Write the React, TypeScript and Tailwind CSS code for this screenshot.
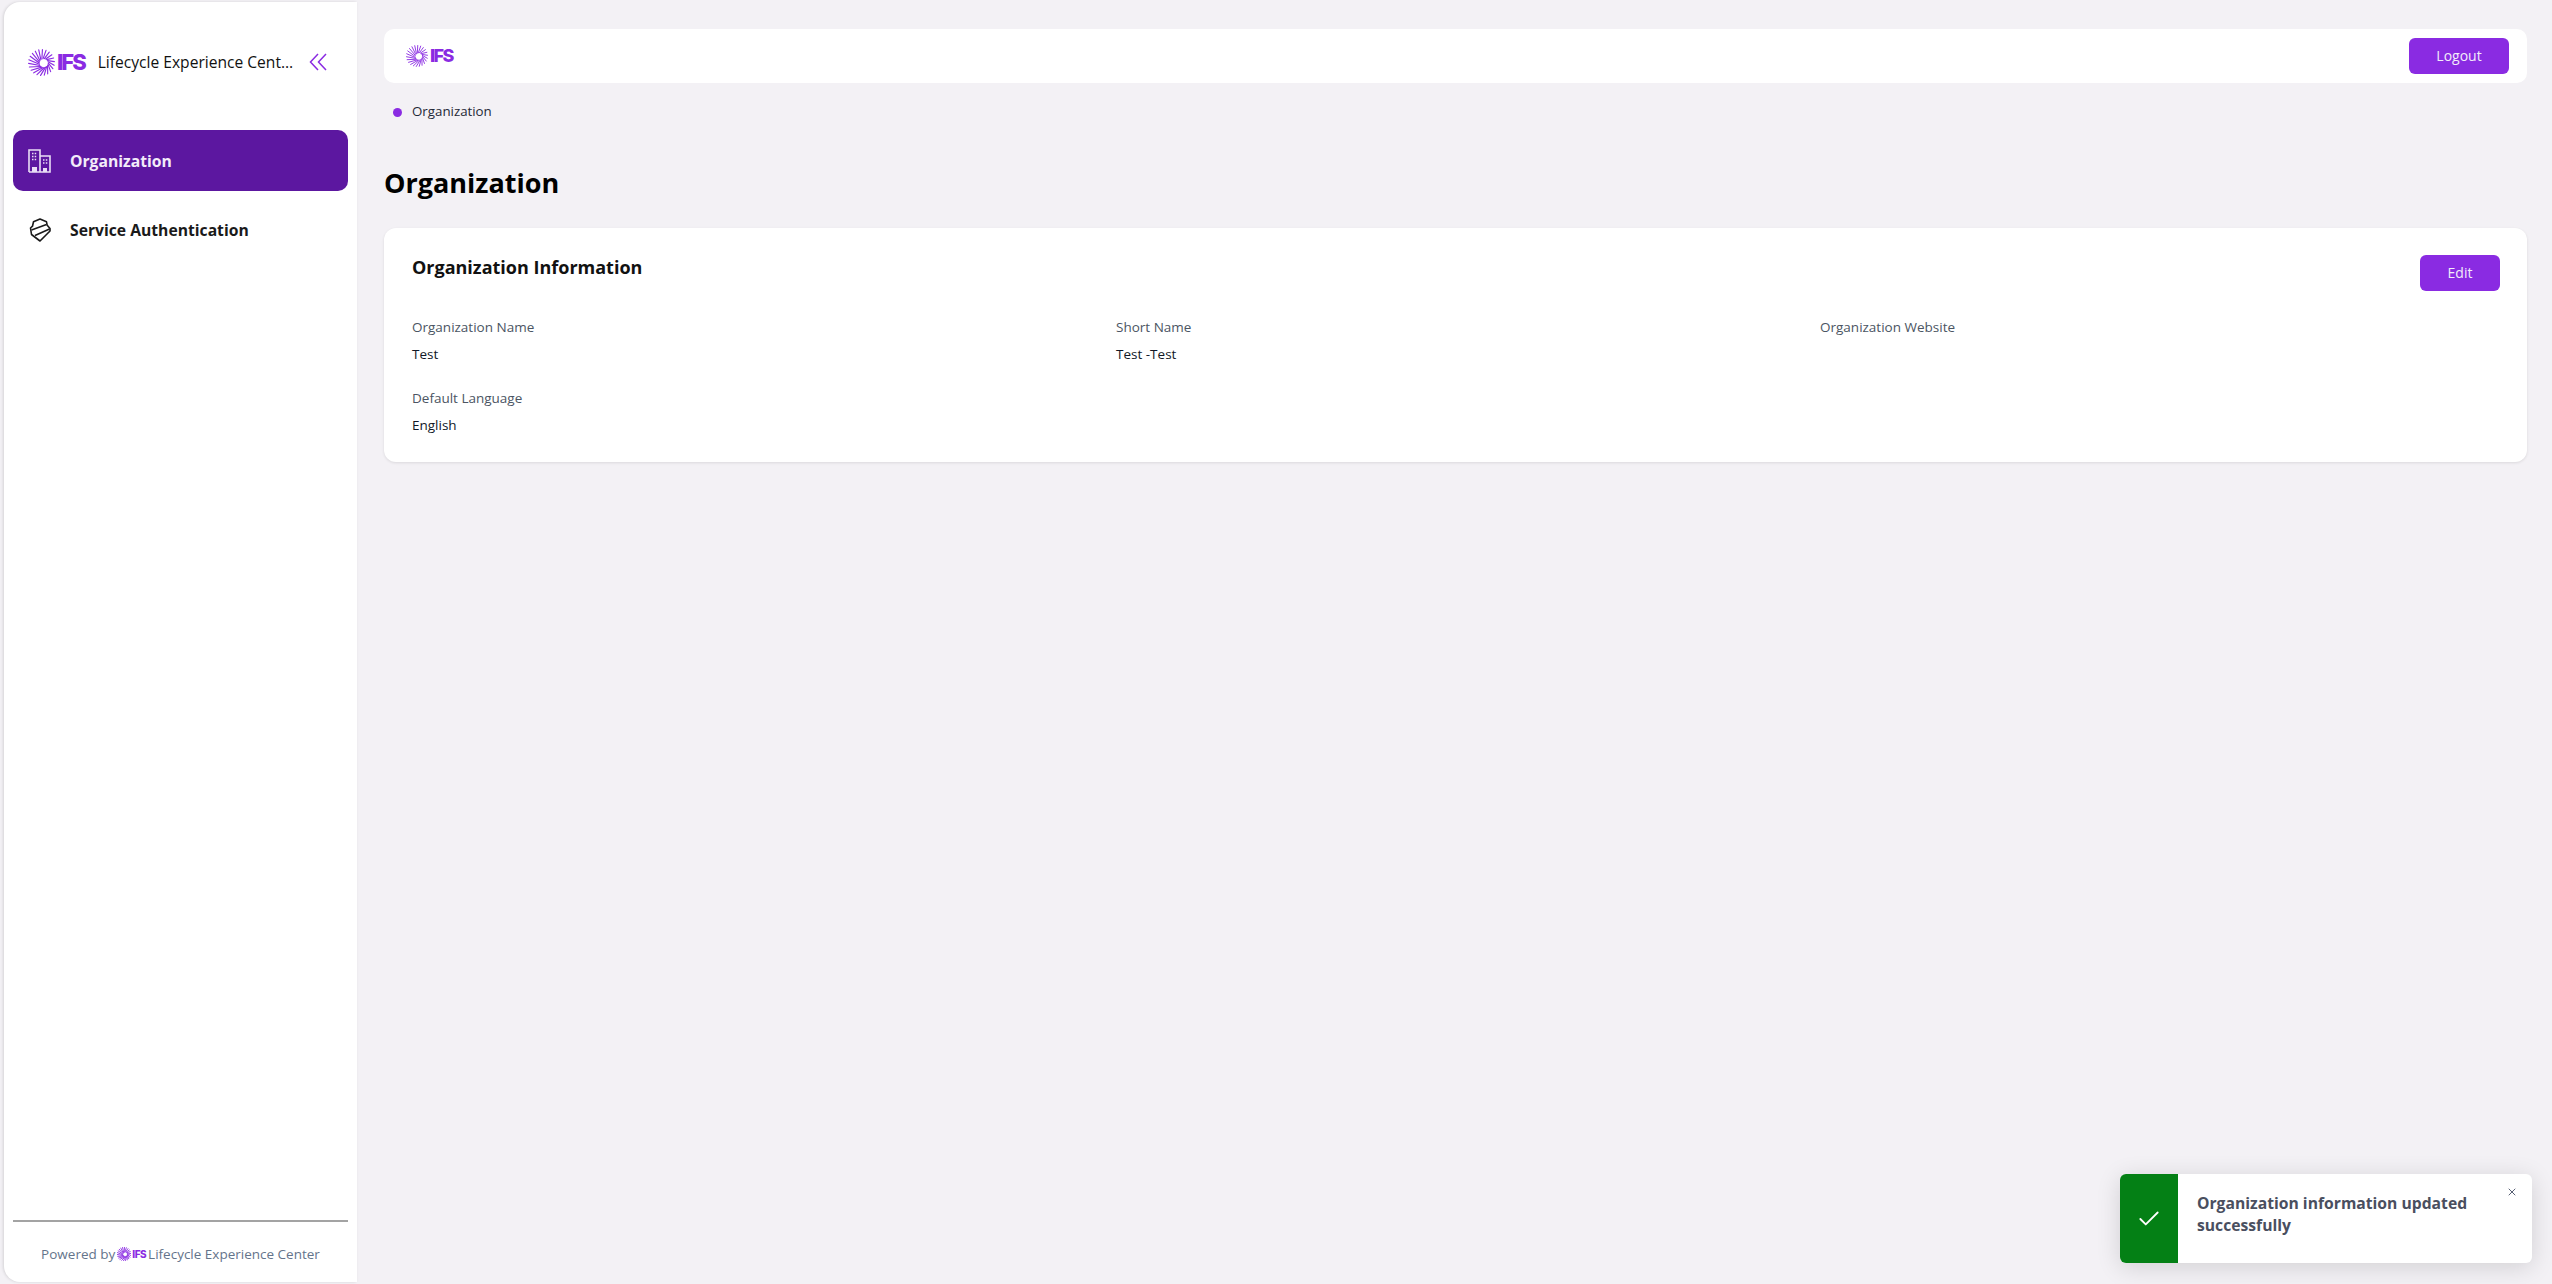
import { Check, X } from "lucide-react";

// sunburst rays: start around an off-centre hole, swing out to the outer ring
const RAYS = Array.from({ length: 22 }, (_, i) => {
  const a = (i * 2 * Math.PI) / 22;
  const b = a + 0.5;
  const x1 = 28 + 8 * Math.cos(a);
  const y1 = 25 + 8 * Math.sin(a);
  const x2 = 24 + 23 * Math.cos(b);
  const y2 = 24 + 23 * Math.sin(b);
  return `M${x1.toFixed(2)} ${y1.toFixed(2)}L${x2.toFixed(2)} ${y2.toFixed(2)}`;
});

function IfsLogo({ sun, text, gap, ray = "2" }: { sun: string; text: string; gap: string; ray?: string }) {
  return (
    <span className={`inline-flex items-center ${gap}`}>
      <svg viewBox="0 0 48 48" className={sun} aria-hidden="true">
        {RAYS.map((d) => (
          <path key={d} d={d} fill="none" stroke="#8a2be2" strokeWidth={ray} strokeLinecap="round" />
        ))}
      </svg>
      <span className={`font-['Inter',sans-serif] font-extrabold text-[#8a2be2] ${text}`}>IFS</span>
    </span>
  );
}

function BuildingIcon() {
  return (
    <svg viewBox="0 0 23 24" className="h-[24px] w-[23px]" fill="none" stroke="#e9def5" strokeWidth="1.600" aria-hidden="true">
      <path d="M1 23V1h11v22" />
      <path d="M12 7h10v16H1" />
      <path d="M4 23v-5h5v5M15 23v-4h4v4" fill="#e9def5" stroke="none" />
      <path d="M4 4.500h1.500M6.700 4.500h1.500M4 7.500h1.500M6.700 7.500h1.500M4 10.500h1.500M6.700 10.500h1.500M15 11h1.500M17.800 11h1.500M15 14h1.500M17.800 14h1.500" />
    </svg>
  );
}

function ShieldIcon() {
  return (
    <svg viewBox="0 0 22 24" className="h-[24px] w-[22px]" fill="none" stroke="#1a1a1a" strokeWidth="1.600" strokeLinejoin="round" aria-hidden="true">
      <path d="M4.500 3.800 11 1l6.500 2.800.7 3.500L21 10.500v2.500L11 23 2.500 16.500 1.500 10l2-1.800z" />
      <path d="M2.500 12 17.500 6.500M6 17.500 20.500 11" />
    </svg>
  );
}

function Field({ label, value }: { label: string; value?: string }) {
  return (
    <div className="h-[50px]">
      <div className="text-[13.500px] leading-[20px] text-[#4b5563]">{label}</div>
      {value && <div className="mt-[7px] text-[13.500px] leading-[20px] text-[#111827]">{value}</div>}
    </div>
  );
}

export default function App() {
  return (
    <div className="flex h-screen overflow-hidden bg-[#f3f1f5] font-['Open_Sans',sans-serif]">
      <aside className="mb-[2px] ml-[4px] mt-[2px] flex w-[353px] shrink-0 flex-col rounded-l-[16px] bg-white px-[9px] shadow-[-1px_0_3px_rgba(0,0,0,0.12)]">
        <div className="mt-[46px] flex h-[28px] items-center pl-[15px]">
          <IfsLogo sun="h-[27px] w-[27px]" text="text-[22px] leading-none tracking-[-2px]" gap="gap-[2px]" />
          <span className="ml-[13px] w-[197px] truncate text-[15.600px] leading-6 text-[#111]">Lifecycle Experience Center</span>
          <svg viewBox="0 0 18 18" className="ml-[14px] h-[18px] w-[18px]" fill="none" stroke="#8a2be2" strokeWidth="1.500" aria-hidden="true">
            <path d="M9 1 1.500 9 9 17M17 1 9.500 9l7.500 8" />
          </svg>
        </div>
        <nav className="mt-[54px] flex flex-col gap-[8px]">
          <a className="flex h-[61px] items-center gap-[19px] rounded-[10px] bg-[#5c17a0] pl-[15px] text-[15.700px] font-bold text-[#f3ecfa]">
            <BuildingIcon />
            <span className="pt-[2px]">Organization</span>
          </a>
          <a className="flex h-[61px] items-center gap-[19px] rounded-[10px] pl-[16px] text-[15.700px] font-bold text-[#1a1a1a]">
            <ShieldIcon />
            <span className="pt-[2px]">Service Authentication</span>
          </a>
        </nav>
        <div className="mt-auto border-t-2 border-[#a3a3a3] pb-[16px] pt-[20px] text-center text-[13.500px] leading-[24px] text-[#64748b]">
          <span className="inline-flex items-center">
            Powered by
            <span className="mx-[2px] inline-flex">
              <IfsLogo sun="h-[14px] w-[14px]" text="text-[10px] leading-none tracking-[-0.500px]" gap="gap-[1px]" ray="3" />
            </span>
            Lifecycle Experience Center
          </span>
        </div>
      </aside>

      <main className="min-w-0 flex-1 pl-[27px] pr-[25px] pt-[29px]">
        <header className="flex h-[54px] items-center justify-between rounded-[10px] bg-white pl-[22px] pr-[18px]">
          <IfsLogo sun="h-[22px] w-[22px]" text="text-[18px] leading-none tracking-[-1.600px]" gap="gap-[2px]" />
          <button className="h-[36px] w-[100px] rounded-[6px] bg-[#8a2be2] pb-[1px] text-sm text-[#f3ecfa]">Logout</button>
        </header>
        <div className="mt-[18px] flex h-[22px] items-center pl-[9px] text-[13.300px] text-[#1f2937]">
          <span className="h-[9px] w-[9px] rounded-full bg-[#8a2be2]" />
          <span className="ml-[10px]">Organization</span>
        </div>
        <h1 className="mt-[41px] text-[27px] font-bold leading-[38px] text-black">Organization</h1>
        <section className="mt-[26px] h-[234px] rounded-[12px] bg-white pl-[28px] pr-[27px] pt-[27px] shadow-[0_1px_3px_rgba(0,0,0,0.1)]">
          <div className="flex items-start justify-between">
            <h2 className="text-lg font-bold leading-[24px] text-[#111]">Organization Information</h2>
            <button className="h-[36px] w-[80px] rounded-[6px] bg-[#8a2be2] pb-[1px] text-sm text-[#f3ecfa]">Edit</button>
          </div>
          <div className="mt-[26px] grid grid-cols-3 gap-x-[24px] gap-y-[21px]">
            <Field label="Organization Name" value="Test" />
            <Field label="Short Name" value="Test -Test" />
            <Field label="Organization Website" />
            <Field label="Default Language" value="English" />
          </div>
        </section>
      </main>

      <div className="absolute bottom-[21px] right-[20px] flex h-[89px] w-[412px] overflow-hidden rounded-[6px] bg-white shadow-[0_4px_24px_rgba(0,0,0,0.14)]">
        <div className="flex w-[58px] shrink-0 items-center justify-center bg-[#048015]">
          <Check className="h-[26px] w-[26px] text-white" strokeWidth={1.700} />
        </div>
        <p className="ml-[19px] w-[290px] pt-[18px] text-[15.700px] font-bold leading-[22px] text-[#4a4f5f]">
          Organization information updated successfully
        </p>
        <X className="absolute right-[14px] top-[12px] h-[12px] w-[12px] text-[#1f2a44]" strokeWidth={1.500} />
      </div>
    </div>
  );
}
